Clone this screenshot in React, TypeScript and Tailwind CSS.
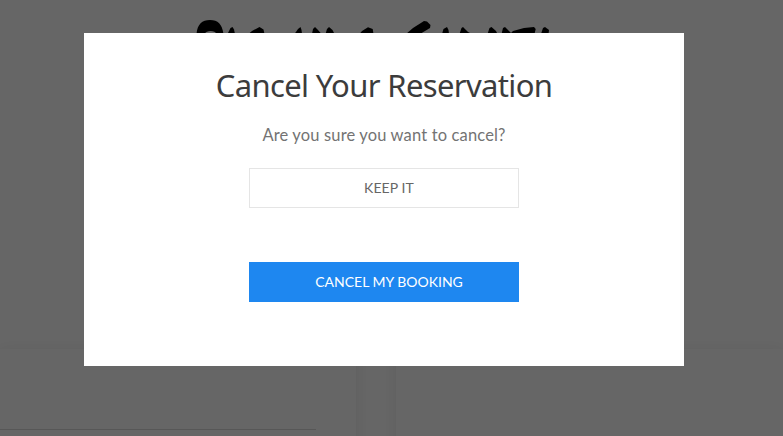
function BrandMark() {
  return (
    <svg className="block h-[70px] w-[360px]" viewBox="196 18 360 70" fill="black" aria-hidden="true">
      <path d="M196.5 34C197.5 24 202 20 210 20C218 20 222 24 223.5 34H216.5C215.5 30 206 30 204.5 34Z" />
      <path d="M227.5 34L230.5 28L232.5 27L234 29.5L235 34Z" />
      <path d="M248.5 34L252 31L259.5 27L263.5 29.5L264.5 34Z" />
      <path d="M294.5 34L298 29L300.5 27L301.5 30L302 34Z" />
      <path d="M312 34L313 29L315 27L318 30L321.5 34Z" />
      <path d="M325.5 34L327 29L329 27L332.5 30L334.5 34Z" />
      <path d="M359.5 34L362 31L368 27.3L372.7 29L373.5 34Z" />
      <path d="M406 34L413 28L424 21L427 21.5L430.5 25L430 28L420 34Z" />
      <path d="M442 34L443.5 29L447 27L448.5 30L449 34Z" />
      <path d="M459.5 34L461.5 28L463 27L466 30L468 32L472 34Z" />
      <path d="M487.5 34L489.5 28L491.5 27L496 31L497.5 34Z" />
      <path d="M501.5 34L503 28L505 27L509 31L511 33L513 31L524 28L534 27L535.7 29L534.5 34Z" />
      <path d="M541 34L543 28L545 27L549 30L548.5 34Z" />
    </svg>
  );
}

export default function App() {
  return (
    <div className="relative h-[436px] w-full overflow-hidden bg-white font-['Lato',sans-serif]">
      <div className="flex h-full flex-col" aria-hidden="true">
        <header className="h-[349px] shrink-0 pl-[196px] pt-[18px]">
          <BrandMark />
        </header>
        <main className="flex h-[120px] shrink-0 gap-10">
          <section className="w-[356px] shrink-0 pt-20 shadow-[0_2px_15px_rgba(0,0,0,0.08)]">
            <div className="w-[316px] border-b border-[#dadada]" />
          </section>
          <section className="grow shadow-[0_2px_15px_rgba(0,0,0,0.08)]" />
        </main>
      </div>
      <div className="absolute inset-0 flex items-start bg-black/60 pl-[84px] pt-[33px]">
        <div
          role="dialog"
          aria-labelledby="dialog-title"
          className="flex h-[333px] w-[600px] shrink-0 flex-col items-center bg-white pt-[31px] text-[#666]"
        >
          <h1
            id="dialog-title"
            className="whitespace-nowrap font-['Noto_Sans',sans-serif] text-[31px] leading-[42px] tracking-[-0.65px] text-[#3c3c3c]"
          >
            Cancel Your Reservation
          </h1>
          <p className="mt-[17px] whitespace-nowrap text-[16.5px] leading-6 tracking-[0.15px] text-[#737373]">
            Are you sure you want to cancel?
          </p>
          <button className="mt-[21px] h-10 w-[270px] border border-[#e5e5e5] pl-[10px] text-sm leading-[38px] tracking-[0.1px] text-[#666]">
            KEEP IT
          </button>
          <button className="mt-[54px] h-10 w-[270px] bg-[#1e87f0] pl-[10px] text-sm leading-10 text-white">
            CANCEL MY BOOKING
          </button>
        </div>
      </div>
    </div>
  );
}
